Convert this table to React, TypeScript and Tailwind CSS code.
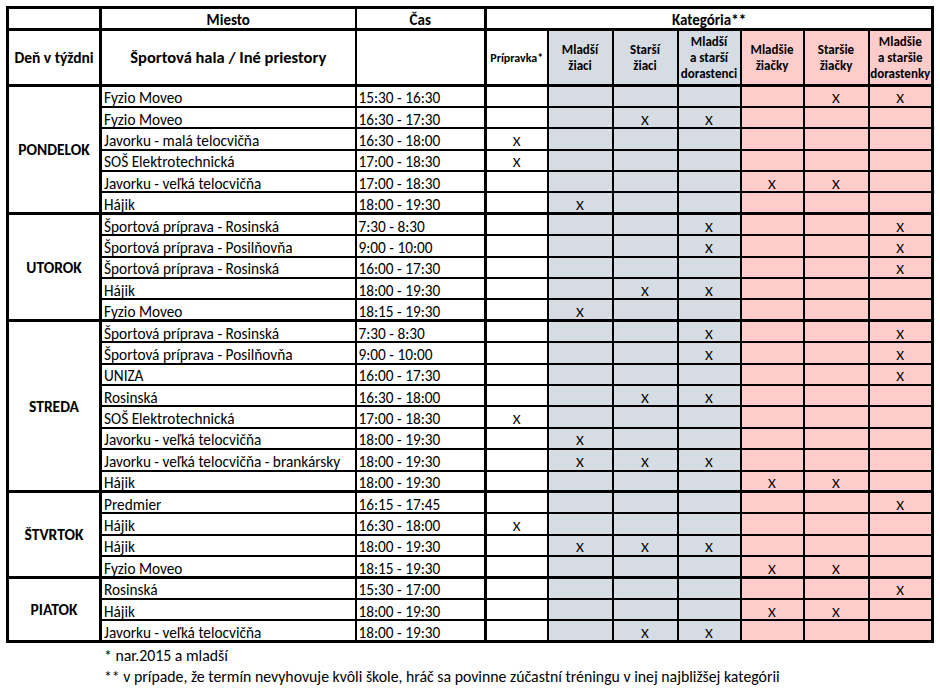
import React from "react";

type Row = { place: string; time: string; x: number[] };
type Day = { name: string; rows: Row[] };

const days: Day[] = [
  {
    name: "PONDELOK",
    rows: [
      { place: "Fyzio Moveo", time: "15:30 - 16:30", x: [5, 6] },
      { place: "Fyzio Moveo", time: "16:30 - 17:30", x: [2, 3] },
      { place: "Javorku - malá telocvičňa", time: "16:30 - 18:00", x: [0] },
      { place: "SOŠ Elektrotechnická", time: "17:00 - 18:30", x: [0] },
      { place: "Javorku - veľká telocvičňa", time: "17:00 - 18:30", x: [4, 5] },
      { place: "Hájik", time: "18:00 - 19:30", x: [1] },
    ],
  },
  {
    name: "UTOROK",
    rows: [
      { place: "Športová príprava - Rosinská", time: "7:30 - 8:30", x: [3, 6] },
      { place: "Športová príprava - Posilňovňa", time: "9:00 - 10:00", x: [3, 6] },
      { place: "Športová príprava - Rosinská", time: "16:00 - 17:30", x: [6] },
      { place: "Hájik", time: "18:00 - 19:30", x: [2, 3] },
      { place: "Fyzio Moveo", time: "18:15 - 19:30", x: [1] },
    ],
  },
  {
    name: "STREDA",
    rows: [
      { place: "Športová príprava - Rosinská", time: "7:30 - 8:30", x: [3, 6] },
      { place: "Športová príprava - Posilňovňa", time: "9:00 - 10:00", x: [3, 6] },
      { place: "UNIZA", time: "16:00 - 17:30", x: [6] },
      { place: "Rosinská", time: "16:30 - 18:00", x: [2, 3] },
      { place: "SOŠ Elektrotechnická", time: "17:00 - 18:30", x: [0] },
      { place: "Javorku - veľká telocvičňa", time: "18:00 - 19:30", x: [1] },
      { place: "Javorku - veľká telocvičňa - brankársky", time: "18:00 - 19:30", x: [1, 2, 3] },
      { place: "Hájik", time: "18:00 - 19:30", x: [4, 5] },
    ],
  },
  {
    name: "ŠTVRTOK",
    rows: [
      { place: "Predmier", time: "16:15 - 17:45", x: [6] },
      { place: "Hájik", time: "16:30 - 18:00", x: [0] },
      { place: "Hájik", time: "18:00 - 19:30", x: [1, 2, 3] },
      { place: "Fyzio Moveo", time: "18:15 - 19:30", x: [4, 5] },
    ],
  },
  {
    name: "PIATOK",
    rows: [
      { place: "Rosinská", time: "15:30 - 17:00", x: [6] },
      { place: "Hájik", time: "18:00 - 19:30", x: [4, 5] },
      { place: "Javorku - veľká telocvičňa", time: "18:00 - 19:30", x: [2, 3] },
    ],
  },
];

const cats = [
  { lines: ["Prípravka*"], bg: "bg-white" },
  { lines: ["Mladší", "žiaci"], bg: "bg-[#d6dce4]" },
  { lines: ["Starší", "žiaci"], bg: "bg-[#d6dce4]" },
  { lines: ["Mladší", "a starší", "dorastenci"], bg: "bg-[#d6dce4]" },
  { lines: ["Mladšie", "žiačky"], bg: "bg-[#ffcccc]" },
  { lines: ["Staršie", "žiačky"], bg: "bg-[#ffcccc]" },
  { lines: ["Mladšie", "a staršie", "dorastenky"], bg: "bg-[#ffcccc]" },
];

// column widths, border centre to border centre
const widths = ["w-[93px]", "w-[255px]", "w-[130px]", "w-[62px]", "w-[65px]", "w-[65px]", "w-[63px]", "w-[63px]", "w-[65px]", "w-[64px]"];

export default function App() {
  return (
    <div className="min-h-screen bg-white text-black font-['Carlito','Lato',sans-serif]">
      <div className="pt-[6px] pl-[6px]">
        <table className="border-collapse table-fixed w-[926px] border-[3px] border-black">
          <colgroup>
            {widths.map((w, i) => (
              <col key={i} className={w} />
            ))}
          </colgroup>
          <thead>
            <tr className="h-[22px]">
              <th className="border-2 border-black border-r-[3px] border-b-[3px]"></th>
              <th className="border-2 border-black border-b-[3px] pt-[3px] text-[15px] leading-[14px] font-bold">Miesto</th>
              <th className="border-2 border-black border-b-[3px] pt-[3px] text-[15px] leading-[14px] font-bold">Čas</th>
              <th
                colSpan={7}
                className="border-2 border-black border-l-[3px] border-b-[3px] pt-[3px] text-[15px] leading-[14px] font-bold">
                Kategória**
              </th>
            </tr>
            <tr className="h-[56px]">
              <th className="border-2 border-black border-r-[3px] border-b-[3px] text-[15.5px] font-bold whitespace-nowrap">
                Deň v týždni
              </th>
              <th className="border-2 border-black border-b-[3px] text-[16.5px] font-bold">Športová hala / Iné priestory</th>
              <th className="border-2 border-black border-b-[3px]"></th>
              {cats.map((c, i) => (
                <th
                  key={i}
                  className={`border-2 border-black border-b-[3px] font-bold leading-[16px] ${c.bg} ${
                    i === 0 ? "border-l-[3px] text-[12px]" : "text-[13px]"
                  }`}>
                  {c.lines.map((l, j) => (
                    <div key={j}>{l}</div>
                  ))}
                </th>
              ))}
            </tr>
          </thead>
          <tbody>
            {days.map((d) =>
              d.rows.map((r, ri) => (
                <tr key={d.name + ri} className="h-[21.4px]">
                  {ri === 0 && (
                    <td
                      rowSpan={d.rows.length}
                      className="border-2 border-black border-r-[3px] border-t-[3px] text-center text-[15.5px] font-bold">
                      {d.name}
                    </td>
                  )}
                  <td
                    className={`border-2 border-black pl-[2px] pt-[4px] text-[15.3px] leading-[12px] whitespace-nowrap ${
                      ri === 0 ? "border-t-[3px]" : ""
                    }`}>
                    {r.place}
                  </td>
                  <td
                    className={`border-2 border-black pl-[2px] pt-[4px] text-[15.3px] leading-[12px] ${
                      ri === 0 ? "border-t-[3px]" : ""
                    }`}>
                    {r.time}
                  </td>
                  {cats.map((c, ci) => (
                    <td
                      key={ci}
                      className={`border-2 border-black pt-[4px] text-center text-[15px] leading-[12px] ${c.bg} ${
                        ci === 0 ? "border-l-[3px]" : ""
                      } ${ri === 0 ? "border-t-[3px]" : ""}`}>
                      {r.x.includes(ci) ? "X" : ""}
                    </td>
                  ))}
                </tr>
              ))
            )}
          </tbody>
        </table>
        <div className="pl-[98px] pt-[2px] text-[15.8px] leading-[21px]">
          <div>* nar.2015 a mladší</div>
          <div>** v prípade, že termín nevyhovuje kvôli škole, hráč sa povinne zúčastní tréningu v inej najbližšej kategórii</div>
        </div>
      </div>
    </div>
  );
}
